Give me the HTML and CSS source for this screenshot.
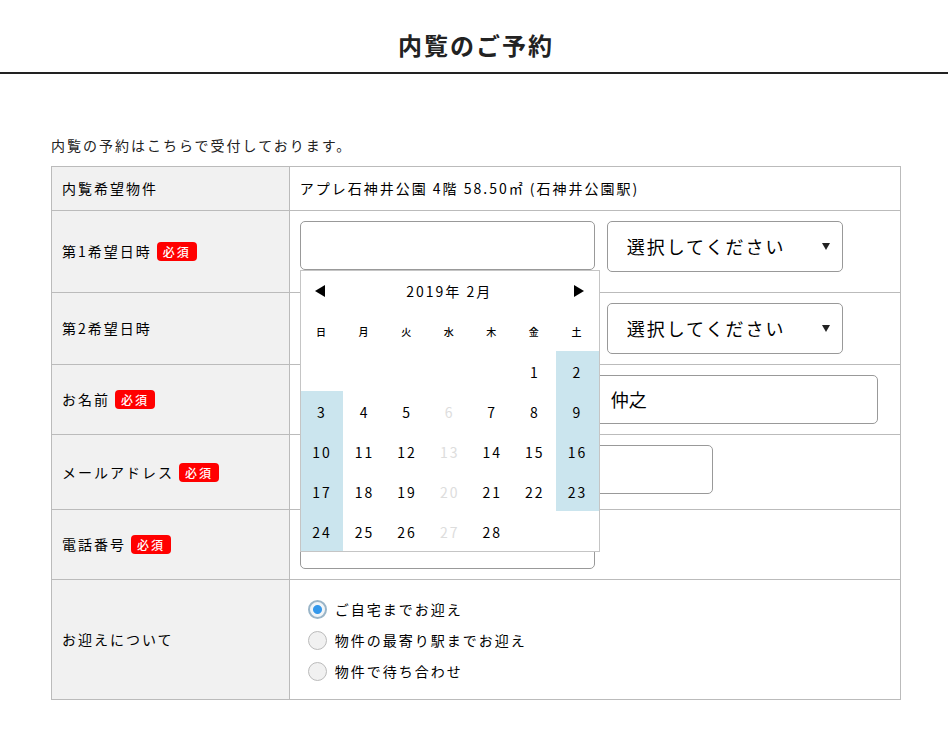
FILE: index.html
```html
<!DOCTYPE html>
<html lang="ja">
<head>
    <meta charset="UTF-8">
    <meta name="viewport" content="width=device-width, initial-scale=1.0">
    <title>内覧のご予約</title>
    <link rel="stylesheet" href="styles.css">
</head>
<body>
    <header class="header">
        <h1 class="title">内覧のご予約</h1>
    </header>
    <form class="content">
        <p class="lead">内覧の予約はこちらで受付しております。</p>
        <table class="form-table">
            <tr>
                <th scope="row">内覧希望物件</th>
                <td>アプレ石神井公園 4階 58.50㎡ (石神井公園駅)</td>
            </tr>
            <tr>
                <th scope="row"><label for="date1">第1希望日時</label><span class="required">必須</span></th>
                <td>
                    <div class="fields with-note">
                        <div class="date-field">
                            <input class="text" type="text" id="date1" name="date1">
                            <div class="calendar">
                                <div class="calendar-head">
                                    <button class="prev" type="button" aria-label="前の月"></button>
                                    <div class="month">2019年 2月</div>
                                    <button class="next" type="button" aria-label="次の月"></button>
                                </div>
                                <table class="days">
                                    <thead>
                                        <tr><th>日</th><th>月</th><th>火</th><th>水</th><th>木</th><th>金</th><th>土</th></tr>
                                    </thead>
                                    <tbody>
                                        <tr>
                                            <td></td><td></td><td></td><td></td><td></td>
                                            <td><button type="button">1</button></td>
                                            <td class="weekend"><button type="button">2</button></td>
                                        </tr>
                                        <tr>
                                            <td class="weekend"><button type="button">3</button></td>
                                            <td><button type="button">4</button></td>
                                            <td><button type="button">5</button></td>
                                            <td><button type="button" disabled>6</button></td>
                                            <td><button type="button">7</button></td>
                                            <td><button type="button">8</button></td>
                                            <td class="weekend"><button type="button">9</button></td>
                                        </tr>
                                        <tr>
                                            <td class="weekend"><button type="button">10</button></td>
                                            <td><button type="button">11</button></td>
                                            <td><button type="button">12</button></td>
                                            <td><button type="button" disabled>13</button></td>
                                            <td><button type="button">14</button></td>
                                            <td><button type="button">15</button></td>
                                            <td class="weekend"><button type="button">16</button></td>
                                        </tr>
                                        <tr>
                                            <td class="weekend"><button type="button">17</button></td>
                                            <td><button type="button">18</button></td>
                                            <td><button type="button">19</button></td>
                                            <td><button type="button" disabled>20</button></td>
                                            <td><button type="button">21</button></td>
                                            <td><button type="button">22</button></td>
                                            <td class="weekend"><button type="button">23</button></td>
                                        </tr>
                                        <tr>
                                            <td class="weekend"><button type="button">24</button></td>
                                            <td><button type="button">25</button></td>
                                            <td><button type="button">26</button></td>
                                            <td><button type="button" disabled>27</button></td>
                                            <td><button type="button">28</button></td>
                                            <td></td><td></td>
                                        </tr>
                                    </tbody>
                                </table>
                            </div>
                        </div>
                        <div class="select-box">
                            <select name="time1" aria-label="第1希望の時間">
                                <option>選択してください</option>
                            </select>
                        </div>
                    </div>
                </td>
            </tr>
            <tr>
                <th scope="row"><label for="date2">第2希望日時</label></th>
                <td>
                    <div class="fields">
                        <div class="date-field">
                            <input class="text" type="text" id="date2" name="date2">
                        </div>
                        <div class="select-box">
                            <select name="time2" aria-label="第2希望の時間">
                                <option>選択してください</option>
                            </select>
                        </div>
                    </div>
                </td>
            </tr>
            <tr>
                <th scope="row"><label for="sei">お名前</label><span class="required">必須</span></th>
                <td>
                    <div class="fields">
                        <input class="text name" type="text" id="sei" name="sei">
                        <input class="text name" type="text" name="mei" value="仲之" aria-label="名">
                    </div>
                </td>
            </tr>
            <tr>
                <th scope="row"><label for="mail">メールアドレス</label><span class="required">必須</span></th>
                <td>
                    <div class="fields with-hint">
                        <input class="text mail" type="email" id="mail" name="mail">
                    </div>
                </td>
            </tr>
            <tr>
                <th scope="row"><label for="tel">電話番号</label><span class="required">必須</span></th>
                <td>
                    <div class="fields">
                        <input class="text tel" type="tel" id="tel" name="tel">
                    </div>
                </td>
            </tr>
            <tr>
                <th scope="row">お迎えについて</th>
                <td>
                    <div class="radios">
                        <label><input type="radio" name="pickup" checked>ご自宅までお迎え</label>
                        <label><input type="radio" name="pickup">物件の最寄り駅までお迎え</label>
                        <label><input type="radio" name="pickup">物件で待ち合わせ</label>
                    </div>
                </td>
            </tr>
        </table>
    </form>
</body>
</html>
```

FILE: styles.css
```css
*{
    box-sizing: border-box;
}
body{
    margin: 0;
    background: #fff;
    color: #000;
    font-family: "Noto Sans CJK JP", sans-serif;
    font-size: 14px;
    line-height: 23px;
    letter-spacing: 2px;
}
input, select, button{
    margin: 0;
    font-family: inherit;
    color: inherit;
}
.header{
    padding: 27px 0 9px 4px;
    border-bottom: 2px solid #222;
    text-align: center;
}
.title{
    margin: 0;
    color: #222;
    font-size: 24px;
    line-height: 36px;
}
.content{
    padding: 60px 47px 36px 51px;
}
.lead{
    margin: 0 0 9px;
    color: #222;
}

/* form */
.form-table{
    width: 100%;
    table-layout: fixed;
    border-collapse: collapse;
}
.form-table > tbody > tr > th,
.form-table > tbody > tr > td{
    padding: 10px;
    border: 1px solid #bbb;
    font-weight: normal;
    text-align: left;
}
.form-table > tbody > tr > th{
    width: 28%;
    background: #f1f1f1;
}
.required{
    display: inline-block;
    margin-left: 5px;
    padding: 0 6px;
    border-radius: 4px;
    background: #f00;
    color: #fff;
    font-size: 12px;
    font-weight: 500;
    line-height: 19px;
}
.fields{
    display: flex;
    align-items: flex-start;
    gap: 2%;
}
.with-note{
    padding-bottom: 10px;
}
.with-hint{
    padding-bottom: 5px;
}
.text{
    height: 49px;
    padding: 0 15px 2px;
    border: 1px solid #999;
    border-radius: 5px;
    background: #fff;
    font-size: 18px;
}
.date-field{
    position: relative;
    width: 50%;
}
.date-field .text{
    display: block;
    width: 100%;
}
.name{
    width: 48%;
}
.mail{
    width: 70%;
}
.tel{
    width: 50%;
}
.select-box{
    position: relative;
    width: 40%;
}
.select-box select{
    appearance: none;
    display: block;
    width: 100%;
    height: 51px;
    padding: 0 30px 2px 19px;
    border: 1px solid #999;
    border-radius: 5px;
    background: #fff;
    font-size: 18px;
    letter-spacing: 2px;
}
.select-box::after{
    content: "";
    position: absolute;
    top: 22px;
    right: 13px;
    border: 4px solid transparent;
    border-top: 7px solid #222;
    border-bottom: 0;
    pointer-events: none;
}

/* calendar */
.calendar{
    position: absolute;
    top: 100%;
    left: 0;
    z-index: 10;
    width: 300px;
    border: 1px solid #c5c5c5;
    background: #fff;
}
.calendar-head{
    display: flex;
    align-items: center;
    justify-content: space-between;
    height: 40px;
    padding: 0 15px 0 14px;
}
.prev, .next{
    width: 0;
    height: 0;
    padding: 0;
    border: 6px solid transparent;
    background: none;
    cursor: pointer;
}
.prev{
    border-left: 0;
    border-right: 10px solid #000;
}
.next{
    border-right: 0;
    border-left: 10px solid #000;
}
.days{
    width: 100%;
    table-layout: fixed;
    border-collapse: collapse;
    text-align: center;
}
.days th, .days td{
    height: 40px;
    padding: 0;
}
.days th{
    font-size: 10px;
    font-weight: 500;
}
.days .weekend{
    background: #cbe5ee;
}
.days button{
    display: block;
    width: 100%;
    height: 40px;
    padding: 2px 0 0;
    border: 0;
    background: none;
    font-size: 14px;
    letter-spacing: 2px;
    cursor: pointer;
}
.days button:disabled{
    color: #ddd;
    cursor: default;
}

/* radio */
.radios{
    display: grid;
    gap: 1px;
    padding: 4px 8px 3px;
}
.radios label{
    display: flex;
    align-items: center;
    gap: 8px;
    height: 30px;
}
.radios input{
    appearance: none;
    width: 19px;
    height: 19px;
    border: 1px solid #bbb;
    border-radius: 50%;
    background: #f1f1f1;
}
.radios input:checked{
    border: 2px solid #9ab5c8;
    background: radial-gradient(circle, #3498eb 4px, #f1f5f8 5px);
}
```
